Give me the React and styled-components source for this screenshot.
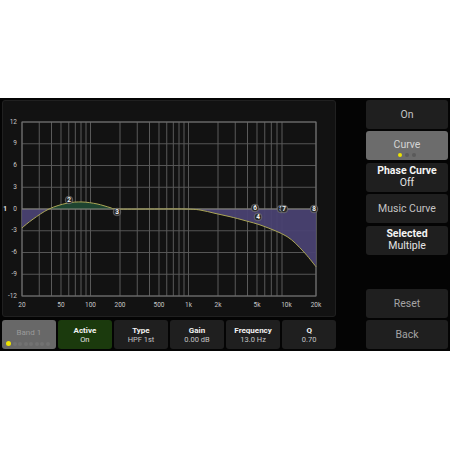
import React from "react";
import styled, { createGlobalStyle } from "styled-components";

const GlobalStyle = createGlobalStyle`
  html, body {
    margin: 0;
    padding: 0;
    background: #ffffff;
  }
  body {
    font-family: Roboto, "Liberation Sans", sans-serif;
  }
`;

// plot geometry (svg coords, svg origin sits at page x=3, y=101)
const X0 = 19;
const X1 = 313;
const Y0 = 21;
const Y1 = 195;
const ZERO = 108;
const fx = (f) => X0 + 98 * Math.log10(f / 20);
const fy = (db) => ZERO - db * 7.25;

const freqLines = [];
[20, 200, 2000].forEach((base) => {
  for (let m = 1; m <= 9; m++) {
    const f = (base / 2) * m;
    if (f >= 20 && f <= 20000) freqLines.push(f);
  }
});
freqLines.push(20000);

const xLabels = [
  ["20", 20], ["50", 50], ["100", 100], ["200", 200], ["500", 500],
  ["1k", 1000], ["2k", 2000], ["5k", 5000], ["10k", 10000], ["20k", 20000],
];
const yLabels = [12, 9, 6, 3, 0, -3, -6, -9, -12];

// response curve, page x and dB
const curvePts = [
  [22, -2.6], [33, -1.4], [49, 0], [67, 0.8], [82, 0.97], [97, 0.7],
  [110, 0.2], [117, 0], [150, 0], [185, 0], [200, -0.14], [215, -0.6],
  [230, -1.06], [245, -1.6], [263, -2.34], [287, -3.8], [303, -5.8], [316, -7.96],
].map(([x, db]) => [x - 3, fy(db)]);

function smoothPath(pts) {
  let d = `M${pts[0][0]},${pts[0][1]}`;
  for (let i = 0; i < pts.length - 1; i++) {
    const p0 = pts[i - 1] || pts[i];
    const p1 = pts[i];
    const p2 = pts[i + 1];
    const p3 = pts[i + 2] || p2;
    const c1x = p1[0] + (p2[0] - p0[0]) / 6;
    const c1y = p1[1] + (p2[1] - p0[1]) / 6;
    const c2x = p2[0] - (p3[0] - p1[0]) / 6;
    const c2y = p2[1] - (p3[1] - p1[1]) / 6;
    d += ` C${c1x.toFixed(2)},${c1y.toFixed(2)} ${c2x.toFixed(2)},${c2y.toFixed(2)} ${p2[0].toFixed(2)},${p2[1].toFixed(2)}`;
  }
  return d;
}

const curveD = smoothPath(curvePts);
const fillD = `${curveD} L${X1},${ZERO} L${X0},${ZERO} Z`;

const markers = [
  { n: "5", x: 281, y: 209 },
  { n: "2", x: 69, y: 200 },
  { n: "3", x: 117, y: 212 },
  { n: "6", x: 255, y: 208 },
  { n: "4", x: 258, y: 217 },
  { n: "7", x: 284, y: 209 },
  { n: "8", x: 314, y: 209 },
];

const rightButtons = [
  { label: "On" },
  { label: "Curve", selected: true, dots: 3 },
  { label: "Phase Curve", value: "Off" },
  { label: "Music Curve" },
  { label: "Selected", value: "Multiple" },
  null,
  { label: "Reset", dim: true },
  { label: "Back", dim: true },
];

const bandParams = [
  { label: "Active", value: "On", active: true },
  { label: "Type", value: "HPF 1st" },
  { label: "Gain", value: "0.00 dB" },
  { label: "Frequency", value: "13.0 Hz" },
  { label: "Q", value: "0.70" },
];

function EqGraph() {
  return (
    <svg width="332" height="215" viewBox="0 0 332 215">
      <defs>
        <clipPath id="above">
          <rect x="0" y="0" width="332" height={ZERO} />
        </clipPath>
        <clipPath id="below">
          <rect x="0" y={ZERO} width="332" height={215 - ZERO} />
        </clipPath>
      </defs>

      {yLabels.map((db) => (
        <line key={db} x1={X0} x2={X1} y1={fy(db)} y2={fy(db)} stroke="#555" strokeWidth="1" />
      ))}
      {freqLines.map((f) => (
        <line key={f} x1={fx(f)} x2={fx(f)} y1={Y0} y2={Y1} stroke="#5a5a5a" strokeWidth="1" />
      ))}
      <rect x={X0} y={Y0} width={X1 - X0} height={Y1 - Y0} fill="none" stroke="#707070" strokeWidth="1" />

      <path d={fillD} fill="#1e4430" clipPath="url(#above)" />
      <path d={fillD} fill="#4a4272" fillOpacity="0.95" clipPath="url(#below)" />
      <line x1={X0} x2={X1} y1={ZERO} y2={ZERO} stroke="#8a8a80" strokeWidth="1" />
      <path d={curveD} fill="none" stroke="#aba656" strokeWidth="1" />

      {yLabels.map((db) => (
        <text key={db} x="14" y={fy(db)} fill="#c8c8c8" fontSize="6.5" textAnchor="end" dominantBaseline="middle">
          {db}
        </text>
      ))}
      {xLabels.map(([t, f]) => (
        <text key={t} x={fx(f)} y="204" fill="#c8c8c8" fontSize="6.5" textAnchor="middle" dominantBaseline="middle">
          {t}
        </text>
      ))}

      <text x="2" y="108" fill="#e8e8e8" fontSize="6.5" fontWeight="700" textAnchor="middle" dominantBaseline="middle">
        1
      </text>
      {markers.map((m) => (
        <g key={m.n}>
          <circle cx={m.x - 3} cy={m.y - 101} r="3.8" fill="#2a2a2a" stroke="#9a9a9a" strokeWidth="0.5" />
          <text x={m.x - 3} y={m.y - 100.6} fill="#f0f0f0" fontSize="6.5" fontWeight="700" textAnchor="middle" dominantBaseline="middle">
            {m.n}
          </text>
        </g>
      ))}
    </svg>
  );
}

export default function App() {
  return (
    <>
      <GlobalStyle />
      <Screen>
        <LeftColumn>
          <GraphPanel>
            <EqGraph />
          </GraphPanel>
          <BottomRow>
            <BandButton>
              <BandName>Band 1</BandName>
              <BandDots>
                {Array.from({ length: 8 }).map((_, i) => (
                  <Dot key={i} $on={i === 0} $size={i === 0 ? 5 : 4} />
                ))}
              </BandDots>
            </BandButton>
            {bandParams.map((p) => (
              <ParamButton key={p.label} $active={p.active}>
                <ParamLabel>{p.label}</ParamLabel>
                <ParamValue $active={p.active}>{p.value}</ParamValue>
              </ParamButton>
            ))}
          </BottomRow>
        </LeftColumn>

        <RightColumn>
          {rightButtons.map((b, i) =>
            b ? (
              <SideButton key={i} $selected={b.selected}>
                {b.value ? (
                  <>
                    <SideTitle>{b.label}</SideTitle>
                    <SideValue>{b.value}</SideValue>
                  </>
                ) : (
                  <SideLabel $selected={b.selected} $dim={b.dim}>{b.label}</SideLabel>
                )}
                {b.dots ? (
                  <CurveDots>
                    {Array.from({ length: b.dots }).map((_, k) => (
                      <Dot key={k} $on={k === 0} $size={4} $dark />
                    ))}
                  </CurveDots>
                ) : null}
              </SideButton>
            ) : (
              <div key={i} />
            )
          )}
        </RightColumn>
      </Screen>
    </>
  );
}

const Screen = styled.div`
  margin-top: 98px;
  height: 253px;
  box-sizing: border-box;
  padding: 2px;
  background: #040404;
  display: flex;
`;

const LeftColumn = styled.div`
  width: 334px;
  display: flex;
  flex-direction: column;
  gap: 3px;
`;

const GraphPanel = styled.div`
  height: 217px;
  box-sizing: border-box;
  border: 1px solid #202020;
  border-radius: 3px;
  background: #121212;
  overflow: hidden;

  svg {
    display: block;
    font-family: Roboto, "Liberation Sans", sans-serif;
  }
`;

const BottomRow = styled.div`
  height: 29px;
  display: flex;
  gap: 2.5px;
`;

const ParamButton = styled.div`
  flex: 1;
  border-radius: 3px;
  background: ${(p) => (p.$active ? "#1b3a0d" : "#1f1f1f")};
  display: flex;
  flex-direction: column;
  align-items: center;
  justify-content: center;
  gap: 1px;
`;

const ParamLabel = styled.div`
  color: #f2f2f2;
  font-size: 8px;
  font-weight: 700;
  line-height: 9px;
`;

const ParamValue = styled.div`
  color: ${(p) => (p.$active ? "#e6e6e6" : "#c4c4c4")};
  font-size: 7.5px;
  line-height: 8px;
`;

const BandButton = styled.div`
  flex: 1;
  border-radius: 3px;
  background: #686868;
  display: flex;
  flex-direction: column;
  align-items: center;
  justify-content: center;
  position: relative;
`;

const BandName = styled.div`
  color: #9a9a9a;
  font-size: 8px;
  margin-top: -4px;
`;

const BandDots = styled.div`
  position: absolute;
  left: 4px;
  bottom: 3px;
  display: flex;
  align-items: center;
  gap: 1.5px;
`;

const Dot = styled.span`
  display: block;
  width: ${(p) => p.$size}px;
  height: ${(p) => p.$size}px;
  border-radius: 50%;
  background: ${(p) => (p.$on ? "#ece300" : p.$dark ? "#5a5a5a" : "#727272")};
`;

const RightColumn = styled.div`
  margin-left: 30px;
  width: 82px;
  display: grid;
  grid-template-rows: repeat(8, 1fr);
  row-gap: 2.5px;
`;

const SideButton = styled.div`
  border-radius: 3px;
  background: ${(p) => (p.$selected ? "#6c6c6c" : "#1f1f1f")};
  display: flex;
  flex-direction: column;
  align-items: center;
  justify-content: center;
  position: relative;
`;

const SideLabel = styled.div`
  color: ${(p) => (p.$selected ? "#d4d4d4" : p.$dim ? "#a4a4a4" : "#c4c4c4")};
  font-size: 10.5px;
  margin-top: ${(p) => (p.$selected ? "-2px" : "0")};
`;

const SideTitle = styled.div`
  color: #f4f4f4;
  font-size: 10.5px;
  font-weight: 700;
  line-height: 12px;
`;

const SideValue = styled.div`
  color: #e4e4e4;
  font-size: 10.5px;
  line-height: 12px;
`;

const CurveDots = styled.div`
  position: absolute;
  bottom: 3px;
  left: 0;
  right: 0;
  display: flex;
  justify-content: center;
  gap: 3px;
`;
